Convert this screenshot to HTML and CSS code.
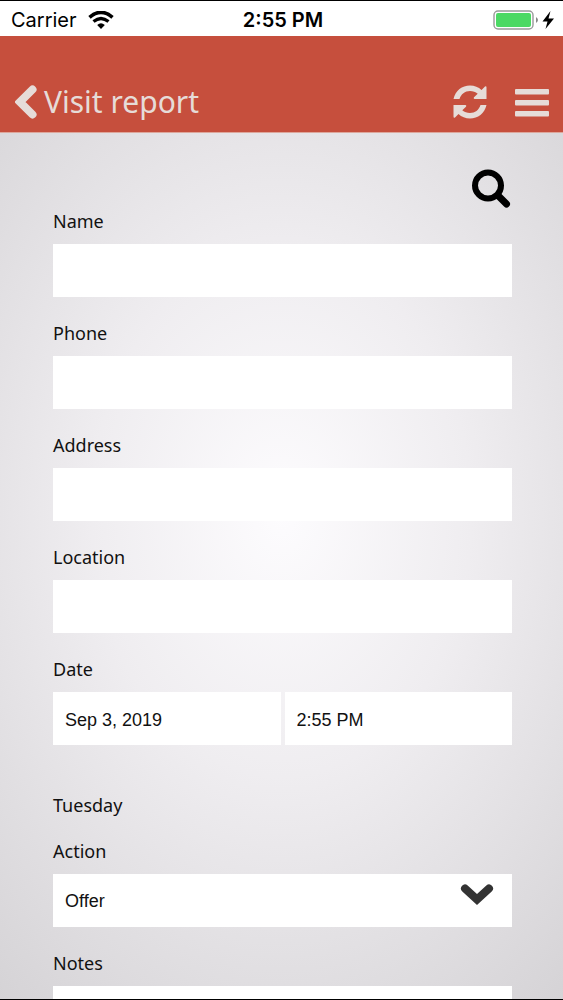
FILE: index.html
```html
<!DOCTYPE html>
<html lang="en">
<head>
<meta charset="utf-8">
<meta name="viewport" content="width=device-width, initial-scale=1">
<title>Visit report</title>
<link rel="stylesheet" href="styles.css">
</head>
<body class="screen">
<div class="status">
  <div class="status-side">
    <span>Carrier</span>
    <svg class="wifi" viewBox="0 0 26 18" aria-hidden="true">
      <path d="M1.5 6.3Q13-3.6 24.5 6.3" fill="none" stroke="#000" stroke-width="3.6"/>
      <path d="M5.5 10.6Q13 4.4 20.500 10.600" fill="none" stroke="#000" stroke-width="3.2"/>
      <path d="M9.200 14Q13 10.600 16.800 14L13 18Z"/>
    </svg>
  </div>
  <time class="status-time">2:55 PM</time>
  <div class="status-side status-end">
    <svg class="battery" viewBox="0 0 62 20" aria-hidden="true">
      <rect x="1" y="1" width="39" height="18" rx="4" fill="#fff" stroke="#999" stroke-width="1.400"/>
      <rect x="3" y="3" width="35" height="14" rx="2" fill="#4cd964"/>
      <path d="M43 7Q47 10 43 13Z" fill="#888"/>
      <path d="M57.500 1L49.500 11.500H54.500L52.500 19L61 8.500H55.500Z"/>
    </svg>
  </div>
</div>
<header class="bar">
  <button class="back" type="button">
    <svg class="back-icon" viewBox="0 0 22 34" aria-hidden="true"><path d="M17.500 4.500L5 17L17.500 29.500" fill="none" stroke="currentColor" stroke-width="8" stroke-linecap="round" stroke-linejoin="miter"/></svg>
    <span>Visit report</span>
  </button>
  <div class="tools">
    <button class="icon-button" type="button" aria-label="Refresh">
      <svg class="tool-icon" viewBox="0 0 34 34" aria-hidden="true" fill="currentColor">
        <path d="M0.500 14C2.500 5.500 9 0.500 17 0.500C21.500 0.500 25.500 2.200 28.500 5L32 1.500Q33.500 0.800 33.500 2.500V14H21.500Q20 13.500 21 12.300L24.700 8.700C22.500 6.800 20 6 17 6C12 6 8 9 6.500 14Z"/>
        <path d="M33.500 20C31.500 28.500 25 33.500 17 33.500C12.500 33.500 8.500 31.800 5.500 29L2 32.500Q0.500 33.200 0.500 31.500V20H12.500Q14 20.500 13 21.700L9.300 25.300C11.500 27.200 14 28 17 28C22 28 26 25 27.500 20Z"/>
      </svg>
    </button>
    <button class="icon-button" type="button" aria-label="Menu">
      <svg class="tool-icon" viewBox="0 0 34 34" aria-hidden="true" fill="currentColor">
        <rect x="0" y="4" width="34" height="5.500" rx="1"/><rect x="0" y="15" width="34" height="5.500" rx="1"/><rect x="0" y="26" width="34" height="5.500" rx="1"/>
      </svg>
    </button>
  </div>
</header>
<main class="content">
  <form class="form">
    <button class="search" type="button" aria-label="Search">
      <svg class="search-icon" viewBox="0 0 40 40" aria-hidden="true"><circle cx="16" cy="16.500" r="13" fill="none" stroke="#000" stroke-width="6"/><path d="M26 26.500L34.500 35" stroke="#000" stroke-width="7" stroke-linecap="round"/></svg>
    </button>
    <div class="field"><label for="name">Name</label><input class="control" id="name" type="text"></div>
    <div class="field"><label for="phone">Phone</label><input class="control" id="phone" type="tel"></div>
    <div class="field"><label for="address">Address</label><input class="control" id="address" type="text"></div>
    <div class="field"><label for="location">Location</label><input class="control" id="location" type="text"></div>
    <div class="field">
      <label for="date">Date</label>
      <div class="pair">
        <input class="control" id="date" type="text" value="Sep 3, 2019">
        <input class="control" type="text" value="2:55 PM" aria-label="Time">
      </div>
    </div>
    <p class="weekday">Tuesday</p>
    <div class="field">
      <label for="action">Action</label>
      <div class="select-wrap">
        <select class="control" id="action"><option>Offer</option></select>
        <svg class="chevron" viewBox="0 0 34 22" aria-hidden="true"><path d="M5 4.500L17 15.500L29 4.500" fill="none" stroke="#333" stroke-width="8" stroke-linecap="round"/></svg>
      </div>
    </div>
    <div class="field"><label for="notes">Notes</label><textarea class="control notes" id="notes"></textarea></div>
  </form>
</main>
</body>
</html>
```
FILE: styles.css
```css
* {
  box-sizing: border-box;
}

.screen {
  margin: 0;
  height: 100vh;
  overflow: hidden;
  display: flex;
  flex-direction: column;
  border-top: 1px solid #000;
  border-bottom: 1px solid #000;
  color: #111;
  font-family: "Noto Sans", sans-serif;
  font-size: 18px;
  line-height: 24px;
}

button {
  padding: 0;
  border: 0;
  background: none;
  color: inherit;
  font: inherit;
}

svg {
  display: block;
}

.status {
  flex: none;
  display: flex;
  align-items: center;
  height: 35px;
  padding: 2px 8px 0 11px;
  background: #fff;
  color: #000;
  font-family: Inter, sans-serif;
  font-size: 20px;
}

.status-side {
  flex: 1;
  display: flex;
  align-items: center;
  gap: 11px;
}

.status-end {
  justify-content: flex-end;
}

.status-time {
  font-weight: 600;
}

.wifi {
  width: 26px;
  height: 18px;
}

.battery {
  width: 62px;
  height: 20px;
}

.bar {
  flex: none;
  display: flex;
  justify-content: space-between;
  align-items: flex-end;
  height: 97px;
  padding: 0 14px 13px 15px;
  background: #c64f3d;
  border-bottom: 1px solid #dda79c;
  color: #e6dcd8;
}

.back {
  display: flex;
  align-items: center;
  gap: 7px;
  font-size: 30px;
  line-height: 34px;
}

.back-icon {
  width: 22px;
  height: 34px;
}

.tools {
  display: flex;
  gap: 28px;
}

.tool-icon {
  width: 34px;
  height: 34px;
}

.content {
  flex: 1;
  min-height: 0;
  overflow: hidden;
  background: radial-gradient(ellipse 500px 690px at 50% 44%, #fdfcfe 0%, #efedf0 38%, #e0dee1 68%, #d0ced1 100%);
}

.form {
  display: flex;
  flex-direction: column;
  padding: 36px 51px 0 53px;
}

.search {
  align-self: flex-end;
}

.search-icon {
  width: 40px;
  height: 40px;
}

.field {
  display: flex;
  flex-direction: column;
  gap: 11px;
  margin-bottom: 24px;
}

.control {
  display: block;
  width: 100%;
  min-width: 0;
  height: 53px;
  margin: 0;
  padding: 0 12px;
  border: 0;
  border-radius: 0;
  background: #fff;
  color: #111;
  font-family: "Liberation Sans", sans-serif;
  font-size: 18px;
  appearance: none;
}

.pair {
  display: flex;
  gap: 4px;
}

.pair .control {
  padding-top: 3px;
}

.weekday {
  margin: 24px 0 22px;
}

.select-wrap {
  position: relative;
}

.chevron {
  position: absolute;
  top: 10px;
  right: 18px;
  width: 34px;
  height: 22px;
  pointer-events: none;
}

.notes {
  height: 106px;
  padding: 12px;
  resize: none;
}
```
